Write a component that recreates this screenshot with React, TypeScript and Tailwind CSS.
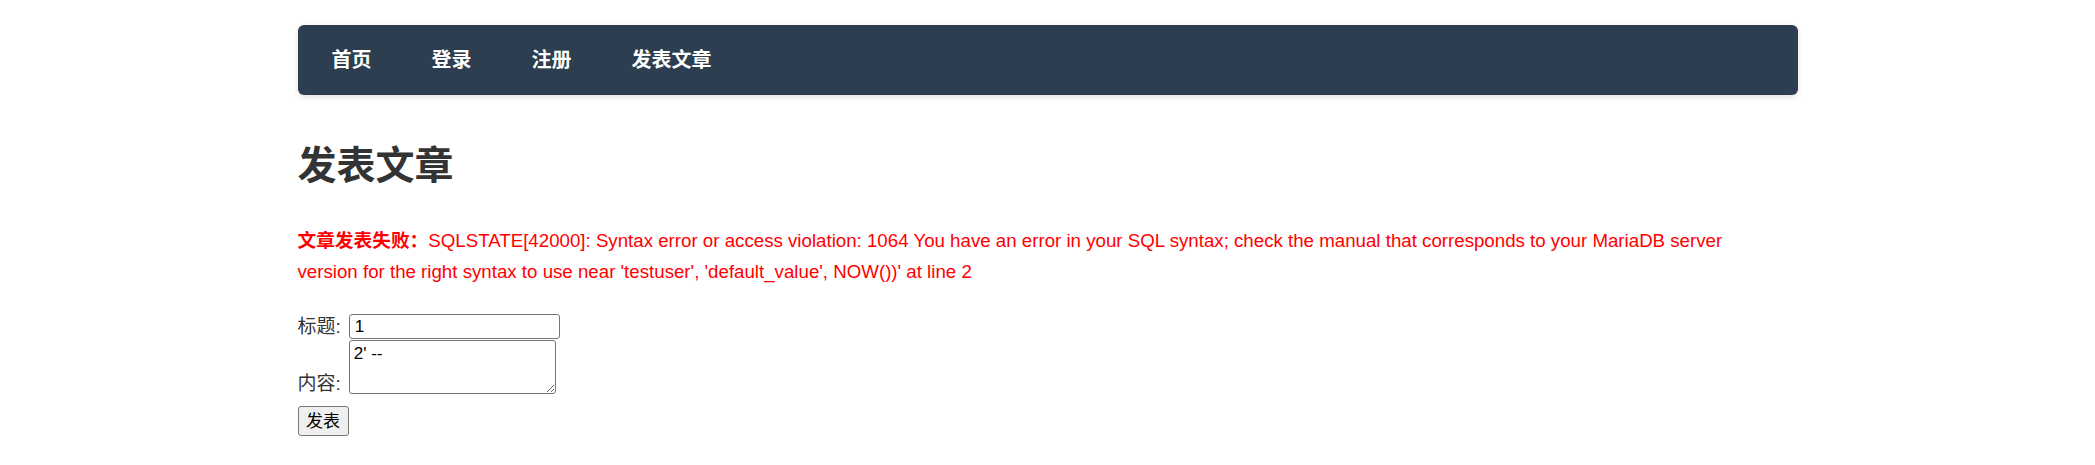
export default function App() {
  return (
    <div className="min-h-[465px] bg-white text-[#333] font-['Liberation_Sans','Noto_Sans_CJK_SC',sans-serif]">
      <div className="max-w-[1500px] mx-auto pt-[25px]">

        {/* Nav */}
        <nav className="h-[70px] flex items-center pl-[34px] gap-[60px] bg-[#2c3e50] rounded-[6px] shadow-[0_2px_6px_rgba(0,0,0,0.12)]">
          <a className="text-white font-bold text-[20px] leading-none">首页</a>
          <a className="text-white font-bold text-[20px] leading-none">登录</a>
          <a className="text-white font-bold text-[20px] leading-none">注册</a>
          <a className="text-white font-bold text-[20px] leading-none">发表文章</a>
        </nav>

        <h1 className="mt-[47px] text-[39px] leading-[48px] font-bold text-[#333]">发表文章</h1>

        {/* Error */}
        <p className="mt-[35px] text-[18.7px] leading-[31px] text-[#ff0000]">
          <strong className="font-bold">文章发表失败：</strong>SQLSTATE[42000]: Syntax error or access violation: 1064 You have an error in your SQL syntax; check the manual that corresponds to your MariaDB server
          <br />
          version for the right syntax to use near 'testuser', 'default_value', NOW())' at line 2
        </p>

        {/* Form */}
        <form className="mt-[27px] flex flex-col items-start">
          <div className="flex items-center gap-[8px]">
            <label className="text-[19px] leading-[25px]">标题:</label>
            <input
              defaultValue="1"
              className="w-[211px] h-[25px] border border-[#767676] rounded-[3px] px-[5px] text-[17px] text-black"
            />
          </div>
          <div className="flex items-end gap-[8px] mt-[1px]">
            <label className="text-[19px] leading-[20px]">内容:</label>
            <textarea
              defaultValue="2' --"
              className="w-[207px] h-[54px] border border-[#767676] rounded-[3px] px-[4px] pt-[3px] pb-0 text-[17px] leading-[20px] text-black resize"
            />
          </div>
          <button
            type="button"
            className="mt-[12px] w-[51px] h-[30px] bg-[#efefef] border border-[#767676] rounded-[3px] text-[17px] leading-none text-black"
          >
            发表
          </button>
        </form>

      </div>
    </div>
  )
}
